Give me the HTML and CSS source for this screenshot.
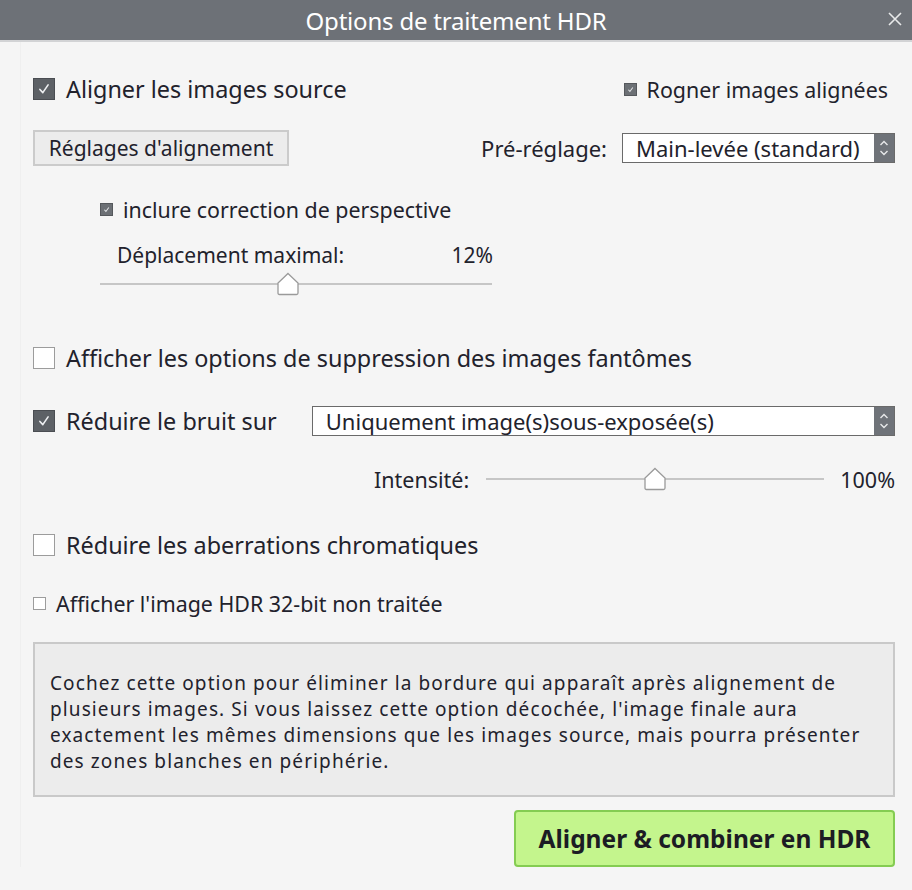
FILE: index.html
```html
<!DOCTYPE html>
<html lang="fr">
<head>
  <meta charset="UTF-8" />
  <meta name="viewport" content="width=device-width, initial-scale=1.0"/>
  <title>Options de traitement HDR</title>
  <link rel="stylesheet" href="styles.css">
</head>
<body>

  <div class="dialog">
    <header class="titlebar">
      <h1>Options de traitement HDR</h1>
      <button class="close-btn" title="Fermer">
        <svg width="14" height="14" viewBox="0 0 14 14"><path d="M1 1 L13 13 M13 1 L1 13" stroke="#e8e9ea" stroke-width="1.6" fill="none"/></svg>
      </button>
    </header>

    <div class="content">

      <div class="row row-align">
        <label class="check big checked">
          <span class="box"><svg viewBox="0 0 22 22"><path d="M6.5 11.5 L9.7 15 L15.5 6.5" stroke="#eef0f2" stroke-width="1.8" fill="none" stroke-linecap="round" stroke-linejoin="round"/></svg></span>
          Aligner les images source
        </label>
        <label class="check small checked">
          <span class="box"><svg viewBox="0 0 13 13"><path d="M4 6.8 L5.8 8.8 L9.2 4.2" stroke="#e6e8ea" stroke-width="1.2" fill="none"/></svg></span>
          Rogner images alignées
        </label>
      </div>

      <div class="row row-preset">
        <button class="plain-btn">Réglages d'alignement</button>
        <div class="preset">
          <span class="label">Pré-réglage:</span>
          <div class="select preset-select">
            <span class="value">Main-levée (standard)</span>
            <span class="arrows"><svg viewBox="0 0 20 28"><path d="M6.5 11 L10 7.5 L13.5 11 M6.5 17 L10 20.5 L13.5 17" stroke="#e8e9ea" stroke-width="1.4" fill="none"/></svg></span>
          </div>
        </div>
      </div>

      <div class="row row-persp">
        <label class="check small checked">
          <span class="box"><svg viewBox="0 0 13 13"><path d="M4 6.8 L5.8 8.8 L9.2 4.2" stroke="#e6e8ea" stroke-width="1.2" fill="none"/></svg></span>
          inclure correction de perspective
        </label>
      </div>

      <div class="row row-shift">
        <span>Déplacement maximal:</span>
        <span>12%</span>
      </div>

      <div class="slider shift-slider">
        <div class="track"></div>
        <span class="thumb" style="left: 48%"><svg viewBox="0 0 24 24"><path d="M12 1.5 L22 11 L22 21 Q22 22.5 20.5 22.5 L3.5 22.5 Q2 22.5 2 21 L2 11 Z" fill="#fff" stroke="#9a9a9a" stroke-width="1.3"/></svg></span>
      </div>

      <div class="row row-ghost">
        <label class="check big">
          <span class="box"></span>
          Afficher les options de suppression des images fantômes
        </label>
      </div>

      <div class="row row-noise">
        <label class="check big checked">
          <span class="box"><svg viewBox="0 0 22 22"><path d="M6.5 11.5 L9.7 15 L15.5 6.5" stroke="#eef0f2" stroke-width="1.8" fill="none" stroke-linecap="round" stroke-linejoin="round"/></svg></span>
          Réduire le bruit sur
        </label>
        <div class="select noise-select">
          <span class="value">Uniquement image(s)sous-exposée(s)</span>
          <span class="arrows"><svg viewBox="0 0 20 28"><path d="M6.5 11 L10 7.5 L13.5 11 M6.5 17 L10 20.5 L13.5 17" stroke="#e8e9ea" stroke-width="1.4" fill="none"/></svg></span>
        </div>
      </div>

      <div class="row row-intensity">
        <span class="label">Intensité:</span>
        <div class="slider intensity-slider">
          <div class="track"></div>
          <span class="thumb" style="left: 50%"><svg viewBox="0 0 24 24"><path d="M12 1.5 L22 11 L22 21 Q22 22.5 20.5 22.5 L3.5 22.5 Q2 22.5 2 21 L2 11 Z" fill="#fff" stroke="#9a9a9a" stroke-width="1.3"/></svg></span>
        </div>
        <span class="pct">100%</span>
      </div>

      <div class="row row-chroma">
        <label class="check big">
          <span class="box"></span>
          Réduire les aberrations chromatiques
        </label>
      </div>

      <div class="row row-raw">
        <label class="check small">
          <span class="box"></span>
          Afficher l'image HDR 32-bit non traitée
        </label>
      </div>

      <div class="info">
        Cochez cette option pour éliminer la bordure qui apparaît après alignement de<br>
        plusieurs images. Si vous laissez cette option décochée, l'image finale aura<br>
        exactement les mêmes dimensions que les images source, mais pourra présenter<br>
        des zones blanches en périphérie.
      </div>

      <div class="actions">
        <button class="go-btn">Aligner &amp; combiner en HDR</button>
      </div>

    </div>
  </div>

</body>
</html>
```

FILE: styles.css
```css
body {
  margin: 0;
  padding: 0;
  font-family: "Noto Sans", "Open Sans", sans-serif;
  background-color: #f5f5f5;
  color: #22222c;
}

.dialog {
  width: 912px;
  height: 890px;
  background-color: #f5f5f5;
}

.titlebar {
  height: 40px;
  background-color: #6d7177;
  border-bottom: 2px solid #d2d3d5;
  display: flex;
  align-items: center;
  justify-content: center;
  position: relative;
}

.titlebar h1 {
  margin: 0;
  font-size: 24px;
  font-weight: normal;
  color: #fff;
  letter-spacing: -0.2px;
}

.close-btn {
  position: absolute;
  right: 10px;
  top: 12px;
  background: none;
  border: none;
  padding: 0;
  width: 14px;
  height: 14px;
  cursor: pointer;
}

.content {
  padding: 30px 17px 0 12px;
  margin-left: 20px;
  border-left: 1px solid #efefef;
}

.row {
  display: flex;
  align-items: center;
}

/* checkboxes */
.check {
  display: flex;
  align-items: center;
  cursor: pointer;
  white-space: nowrap;
}

.check .box {
  display: inline-block;
  box-sizing: border-box;
  flex: none;
}

.check .box svg {
  display: block;
  width: 100%;
  height: 100%;
}

.check.big {
  font-size: 23.4px;
  gap: 11px;
}

.check.big .box {
  width: 22px;
  height: 22px;
  border: 1.5px solid #9c9c9c;
  background: #fff;
}

.check.big.checked .box {
  background: #5d6166;
  border-color: #4a4d52;
}

.check.small {
  font-size: 21.4px;
  gap: 10px;
}

.check.small .box {
  width: 13px;
  height: 13px;
  border: 1px solid #9c9c9c;
  background: #fff;
}

.check.small.checked .box {
  background: #6c7075;
  border-color: #55585c;
}

.row-align {
  height: 34px;
  justify-content: space-between;
}

.row-align .check.small {
  font-size: 21.4px;
  margin-right: 7px;
}

.row-preset {
  height: 36px;
  margin-top: 24px;
  justify-content: space-between;
}

.plain-btn {
  height: 36px;
  width: 256px;
  padding: 0;
  font-family: inherit;
  font-size: 21px;
  color: #22222c;
  background: #ececec;
  border: 2px solid #cbcbcb;
  cursor: pointer;
  white-space: nowrap;
}

.preset {
  display: flex;
  align-items: center;
  gap: 15px;
  font-size: 22px;
}

.select {
  display: flex;
  align-items: stretch;
  height: 30px;
  box-sizing: border-box;
  border: 1.5px solid #6a6a6a;
  background: #fff;
  font-size: 22px;
}

.select .value {
  flex: 1;
  display: flex;
  align-items: center;
  padding-left: 13px;
  white-space: nowrap;
}

.select .arrows {
  width: 20px;
  background: #6f7379;
}

.select .arrows svg {
  display: block;
  width: 20px;
  height: 100%;
}

.preset-select {
  width: 273px;
}

.row-persp {
  height: 26px;
  margin-top: 30px;
  padding-left: 67px;
}

.row-shift {
  height: 24px;
  margin-top: 21px;
  margin-left: 84px;
  width: 376px;
  justify-content: space-between;
  font-size: 21px;
}

/* sliders */
.slider {
  position: relative;
  height: 20px;
}

.slider .track {
  position: absolute;
  left: 0;
  right: 0;
  top: 9px;
  height: 2px;
  background: #c6c6c6;
}

.slider .thumb {
  position: absolute;
  top: -2px;
  width: 24px;
  height: 24px;
  margin-left: -12px;
}

.slider .thumb svg {
  display: block;
  width: 24px;
  height: 24px;
}

.shift-slider {
  margin-top: 7px;
  margin-left: 67px;
  width: 392px;
}

.row-ghost {
  height: 34px;
  margin-top: 47px;
}

.row-noise {
  height: 34px;
  margin-top: 29px;
  gap: 35px;
}

.noise-select {
  flex: 1;
}

.row-intensity {
  height: 26px;
  margin-top: 28px;
  padding-left: 341px;
  font-size: 21.5px;
}

.intensity-slider {
  width: 339px;
  margin-left: 17px;
  margin-right: 16px;
}

.row-chroma {
  height: 34px;
  margin-top: 36px;
}

.row-raw {
  height: 26px;
  margin-top: 28px;
}

.info {
  margin-top: 26px;
  height: 155px;
  box-sizing: border-box;
  padding: 26px 15px 0 15px;
  background: #ececec;
  border: 2px solid #c9c9c9;
  font-size: 19px;
  line-height: 26px;
  letter-spacing: 1.1px;
  white-space: nowrap;
}

.actions {
  display: flex;
  justify-content: flex-end;
  margin-top: 13px;
}

.go-btn {
  width: 381px;
  height: 57px;
  font-family: inherit;
  font-size: 24.5px;
  font-weight: bold;
  color: #1c1c24;
  background: #c4f58d;
  border: 2px solid #84cc52;
  border-radius: 4px;
  cursor: pointer;
}
```
